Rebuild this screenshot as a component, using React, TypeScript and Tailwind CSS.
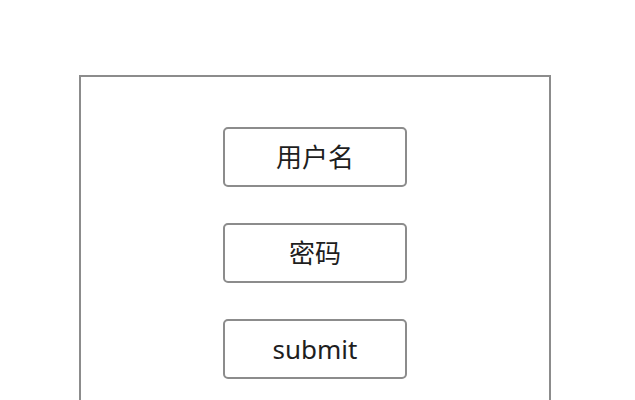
export default function App(): React.ReactElement {
  const fields = ["用户名", "密码", "submit"];

  return (
    <div
      className="h-[400px] overflow-hidden bg-white pt-[75px] pl-[79px]"
      style={{ fontFamily: '"Noto Sans", "Noto Sans CJK SC", sans-serif' }}
    >
      <div className="flex h-[325px] w-[472px] flex-col items-center gap-[36px] border-2 border-b-0 border-[#8c8c8c] pt-[50px]">
        {fields.map((label) => (
          <button
            key={label}
            className="flex h-[60px] w-[184px] items-center justify-center rounded-[5px] border-2 border-[#8c8c8c] bg-white text-[26px] text-[#1e1e1e]"
          >
            {label}
          </button>
        ))}
      </div>
    </div>
  );
}
